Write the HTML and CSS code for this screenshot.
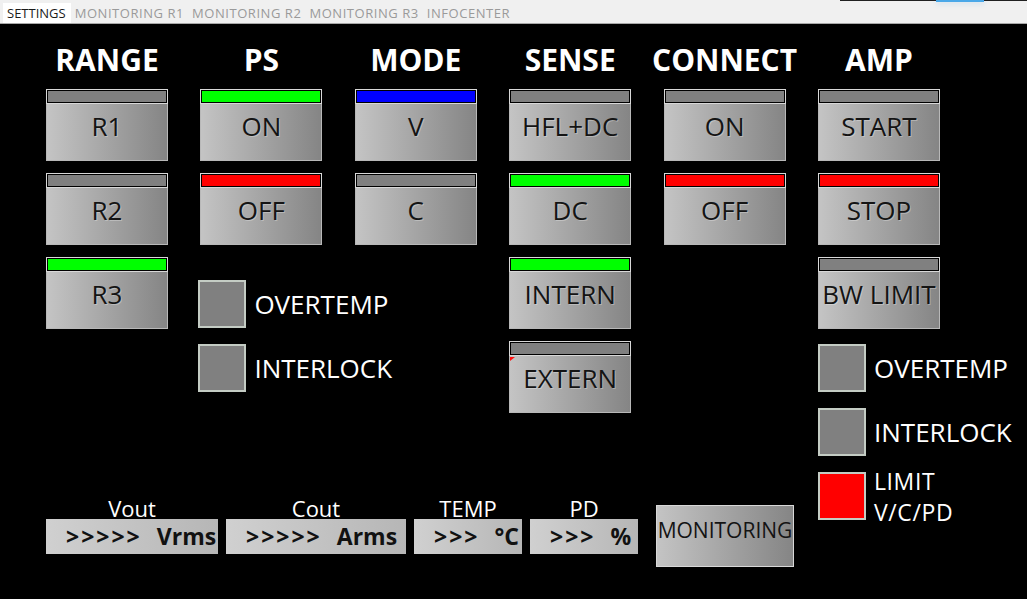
FILE: index.html
```html
<!DOCTYPE html>
<html lang="en">
<head>
    <meta charset="UTF-8">
    <meta name="viewport" content="width=device-width, initial-scale=1.0">
    <title>Settings</title>
    <link rel="stylesheet" href="styles.css">
</head>
<body>
    <div class="tabs">
        <span class="tab active">SETTINGS</span>
        <span class="tab">MONITORING R1</span>
        <span class="tab">MONITORING R2</span>
        <span class="tab">MONITORING R3</span>
        <span class="tab">INFOCENTER</span>
    </div>
    <div class="window-edge"><span class="edge-blue"></span></div>

    <div class="panel">
        <div class="left">
            <div class="cols">
                <div class="col">
                    <h2>RANGE</h2>
                    <div class="btn"><div class="lamp"><span class="off"></span></div><div class="face">R1</div></div>
                    <div class="btn"><div class="lamp"><span class="off"></span></div><div class="face">R2</div></div>
                    <div class="btn"><div class="lamp"><span class="green"></span></div><div class="face">R3</div></div>
                </div>

                <div class="col">
                    <h2>PS</h2>
                    <div class="btn"><div class="lamp"><span class="green"></span></div><div class="face">ON</div></div>
                    <div class="btn"><div class="lamp"><span class="red"></span></div><div class="face">OFF</div></div>
                    <div class="indicators ps-ind">
                        <div class="ind"><div class="square"></div><span>OVERTEMP</span></div>
                        <div class="ind"><div class="square"></div><span>INTERLOCK</span></div>
                    </div>
                </div>

                <div class="col">
                    <h2>MODE</h2>
                    <div class="btn"><div class="lamp"><span class="blue"></span></div><div class="face">V</div></div>
                    <div class="btn"><div class="lamp"><span class="off"></span></div><div class="face">C</div></div>
                </div>

                <div class="col">
                    <h2>SENSE</h2>
                    <div class="btn"><div class="lamp"><span class="off"></span></div><div class="face">HFL+DC</div></div>
                    <div class="btn"><div class="lamp"><span class="green"></span></div><div class="face">DC</div></div>
                    <div class="btn"><div class="lamp"><span class="green"></span></div><div class="face">INTERN</div></div>
                    <div class="btn"><div class="lamp"><span class="off"></span></div><div class="face marked">EXTERN</div></div>
                </div>

                <div class="col">
                    <h2>CONNECT</h2>
                    <div class="btn"><div class="lamp"><span class="off"></span></div><div class="face">ON</div></div>
                    <div class="btn"><div class="lamp"><span class="red"></span></div><div class="face">OFF</div></div>
                </div>
            </div>

            <div class="readouts">
                <div class="readout vout">
                    <div class="label">Vout</div>
                    <div class="value"><span class="arrows">&gt;&gt;&gt;&gt;&gt;</span><span class="unit">Vrms</span></div>
                </div>
                <div class="readout cout">
                    <div class="label">Cout</div>
                    <div class="value"><span class="arrows">&gt;&gt;&gt;&gt;&gt;</span><span class="unit">Arms</span></div>
                </div>
                <div class="readout small">
                    <div class="label">TEMP</div>
                    <div class="value"><span class="arrows">&gt;&gt;&gt;</span><span class="unit">°C</span></div>
                </div>
                <div class="readout small">
                    <div class="label">PD</div>
                    <div class="value"><span class="arrows">&gt;&gt;&gt;</span><span class="unit">%</span></div>
                </div>
                <div class="monitor-btn">MONITORING</div>
            </div>
        </div>

        <div class="col">
            <h2>AMP</h2>
            <div class="btn"><div class="lamp"><span class="off"></span></div><div class="face">START</div></div>
            <div class="btn"><div class="lamp"><span class="red"></span></div><div class="face">STOP</div></div>
            <div class="btn"><div class="lamp"><span class="off"></span></div><div class="face">BW LIMIT</div></div>
            <div class="indicators amp-ind">
                <div class="ind"><div class="square"></div><span>OVERTEMP</span></div>
                <div class="ind"><div class="square"></div><span>INTERLOCK</span></div>
                <div class="ind"><div class="square red"></div><span class="two-line">LIMIT<br>V/C/PD</span></div>
            </div>
        </div>
    </div>
</body>
</html>
```

FILE: styles.css
```css
body {
    margin: 0;
    height: 599px;
    overflow: hidden;
    background-color: #000;
    font-family: "Open Sans", "Noto Sans", sans-serif;
    color: #fff;
    position: relative;
}

.tabs {
    display: flex;
    align-items: flex-end;
    height: 23px;
    padding-left: 3px;
    background-color: #f0f0f0;
    border-bottom: 1px solid #a8a8a8;
    font-size: 13px;
}

.tab {
    padding: 0 4px;
    height: 20px;
    line-height: 21px;
    color: #9a9a9a;
    letter-spacing: 0.55px;
}

.tab.active {
    background-color: #fff;
    color: #1a1a1a;
    letter-spacing: 0;
    padding: 0 5px 0 4px;
}

.window-edge {
    position: absolute;
    top: 0;
    left: 840px;
    right: 0;
    height: 1px;
    background-color: #202020;
}

.edge-blue {
    position: absolute;
    left: 96px;
    top: 0;
    width: 48px;
    height: 2px;
    background-color: #4aa8e8;
    box-shadow: 0 2px 4px rgba(120, 190, 240, 0.35);
}

.panel {
    display: flex;
    gap: 32.4px;
    padding: 16px 0 0 46px;
}

.left {
    flex: none;
    width: 739.6px;
}

.cols {
    display: flex;
    gap: 32.4px;
}

.col {
    display: flex;
    flex-direction: column;
    gap: 12px;
    width: 122px;
    flex: none;
}

.col h2 {
    margin: 0 -20px -3px;
    height: 40px;
    line-height: 40px;
    font-size: 30px;
    font-weight: 700;
    text-align: center;
    white-space: nowrap;
}

.btn {
    width: 122px;
}

.lamp {
    box-sizing: border-box;
    height: 15px;
    padding: 1px;
    border: 1px solid #d8d8d8;
    background-color: #000;
}

.lamp span {
    display: block;
    height: 100%;
}

.lamp .off { background-color: #808080; }
.lamp .green { background-color: #00ff00; }
.lamp .red { background-color: #ff0000; }
.lamp .blue { background-color: #0000ff; }

.face {
    box-sizing: border-box;
    height: 57px;
    padding-top: 4px;
    border: 1px solid #b8b8b8;
    border-top: none;
    background: linear-gradient(90deg, #c4c4c4, #858585);
    color: #141414;
    font-size: 26px;
    line-height: 36px;
    text-align: center;
    white-space: nowrap;
    text-shadow: 1px 1px 0 rgba(255, 255, 255, 0.3);
    position: relative;
}

.face.marked::before {
    content: "";
    position: absolute;
    left: 0;
    top: 1px;
    border-top: 4px solid #ff1010;
    border-right: 5px solid transparent;
}

.indicators {
    display: flex;
    flex-direction: column;
    gap: 16px;
}

.ps-ind {
    margin-top: 23px;
    margin-left: -2px;
}

.amp-ind {
    margin-top: 3px;
}

.ind {
    display: flex;
    align-items: center;
    gap: 8px;
    height: 48px;
    white-space: nowrap;
    font-size: 26px;
}

.square {
    box-sizing: border-box;
    flex: none;
    width: 48px;
    height: 48px;
    border: 2px solid #c4ccc4;
    background-color: #808080;
}

.square.red {
    background-color: #ff0000;
}

.two-line {
    font-size: 23px;
    letter-spacing: 0.6px;
    line-height: 31.5px;
    margin-top: 2px;
}

.readouts {
    display: flex;
    align-items: flex-start;
    gap: 8px;
    margin-top: 84px;
}

.readout {
    flex: none;
}

.readout .label {
    height: 22px;
    line-height: 22px;
    font-size: 22px;
    text-align: center;
}

.value {
    box-sizing: border-box;
    height: 35px;
    line-height: 35px;
    padding-left: 20px;
    background: linear-gradient(90deg, #d0d0d0, #b6b6b6);
    color: #111;
    font-size: 23px;
    font-weight: 700;
    white-space: nowrap;
}

.arrows {
    letter-spacing: 2px;
}

.unit {
    margin-left: 15px;
}

.vout { width: 172px; }
.cout { width: 180px; }
.small { width: 108px; }

.monitor-btn {
    flex: none;
    box-sizing: border-box;
    width: 138px;
    height: 62px;
    margin: 8px 0 0 10px;
    padding-top: 9px;
    border: 1px solid #d8d8d8;
    background: linear-gradient(90deg, #c4c4c4, #858585);
    color: #141414;
    font-size: 21px;
    line-height: 30px;
    text-align: center;
}
```
